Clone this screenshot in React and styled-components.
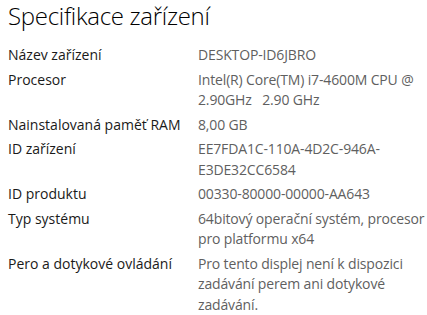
import React from "react";
import styled, { createGlobalStyle } from "styled-components";

const Global = createGlobalStyle`
  html, body { margin: 0; padding: 0; background: #ffffff; }
  body { font-family: "Open Sans", "Noto Sans", sans-serif; }
`;

const Page = styled.div`
  width: 427px;
  height: 315px;
  overflow: hidden;
  padding: 0 0 0 8px;
  box-sizing: border-box;
`;

const Title = styled.h1`
  margin: 0;
  font-size: 24px;
  line-height: 31px;
  font-weight: 300;
  color: #000;
  letter-spacing: -0.3px;
`;

const Grid = styled.dl`
  margin: 14px 0 0 0;
  display: grid;
  grid-template-columns: 190px 229px;
  row-gap: 4px;
  font-size: 14px;
  line-height: 20.5px;
`;

const Label = styled.dt`
  margin: 0;
  color: #1a1a1a;
`;

const Value = styled.dd`
  margin: 0;
  color: #5f5f5f;
  letter-spacing: -0.15px;
`;

const rows = [
  ["Název zařízení", "DESKTOP-ID6JBRO"],
  ["Procesor", "Intel(R) Core(TM) i7-4600M CPU @ 2.90GHz\u00a0\u00a0 2.90 GHz"],
  ["Nainstalovaná paměť RAM", "8,00 GB"],
  ["ID zařízení", "EE7FDA1C-110A-4D2C-946A-E3DE32CC6584"],
  ["ID produktu", "00330-80000-00000-AA643"],
  ["Typ systému", "64bitový operační systém, procesor pro platformu x64"],
  ["Pero a dotykové ovládání", "Pro tento displej není k dispozici zadávání perem ani dotykové zadávání."],
];

export default function App() {
  return (
    <Page>
      <Global />
      <Title>Specifikace zařízení</Title>
      <Grid>
        {rows.map(([l, v]) => (
          <React.Fragment key={l}>
            <Label>{l}</Label>
            <Value>{v}</Value>
          </React.Fragment>
        ))}
      </Grid>
    </Page>
  );
}
